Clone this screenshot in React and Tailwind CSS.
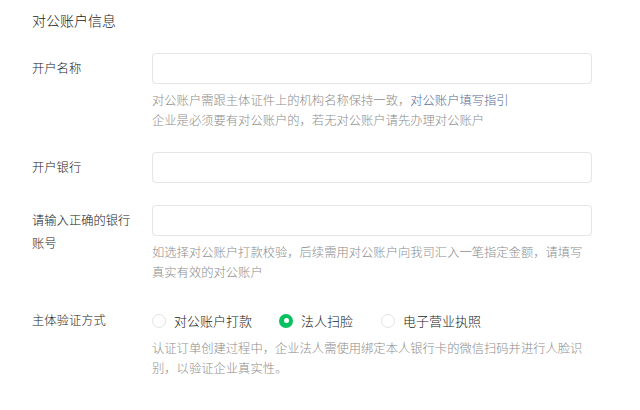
import React from 'react';

const font = { fontFamily: '"Noto Sans CJK SC", "Noto Sans", sans-serif' };

function Label({ children }) {
  return (
    <div className="w-[120px] shrink-0 pt-[4px] text-[12.3px] leading-[23px] text-[#222]">
      {children}
    </div>
  );
}

function Input() {
  return (
    <input
      type="text"
      className="h-[31px] w-[440px] rounded-[4px] border border-[#e6e6e6] bg-white px-3 text-[13px] outline-none shadow-[0_0_1px_rgba(0,0,0,0.06)]"
    />
  );
}

function Help({ children }) {
  return (
    <div className="mt-[7px] text-[12.3px] leading-[19.5px] text-[#8c8c8c]">{children}</div>
  );
}

function Radio({ checked, label }) {
  return (
    <label className="flex items-center">
      {checked ? (
        <span className="flex h-[14px] w-[14px] items-center justify-center rounded-full bg-[#07c160]">
          <span className="h-[5px] w-[5px] rounded-full bg-white" />
        </span>
      ) : (
        <span className="h-[14px] w-[14px] rounded-full border border-[#e3e3e3] bg-white" />
      )}
      <span className="ml-[8px] text-[13px] text-[#222]">{label}</span>
    </label>
  );
}

export default function App() {
  return (
    <div className="min-h-[410px] w-[640px] bg-white px-8 pt-[10px] font-light" style={font}>
      <div className="text-[14px] leading-[20px] text-[#222]">对公账户信息</div>

      <div className="mt-[23px] flex">
        <Label>开户名称</Label>
        <div>
          <Input />
          <Help>
            对公账户需跟主体证件上的机构名称保持一致，<span className="text-[#576b95]">对公账户填写指引</span>
            <br />
            企业是必须要有对公账户的，若无对公账户请先办理对公账户
          </Help>
        </div>
      </div>

      <div className="mt-[22px] flex">
        <Label>开户银行</Label>
        <Input />
      </div>

      <div className="mt-[22px] flex">
        <Label>
          请输入正确的银行
          <br />
          账号
        </Label>
        <div>
          <Input />
          <Help>
            如选择对公账户打款校验，后续需用对公账户向我司汇入一笔指定金额，请填写
            <br />
            真实有效的对公账户
          </Help>
        </div>
      </div>

      <div className="mt-[23px] flex">
        <Label>主体验证方式</Label>
        <div className="pt-[4px]">
          <div className="flex h-[23px] items-center">
            <Radio label="对公账户打款" />
            <div className="ml-[27px]">
              <Radio checked label="法人扫脸" />
            </div>
            <div className="ml-[28px]">
              <Radio label="电子营业执照" />
            </div>
          </div>
          <Help>
            认证订单创建过程中，企业法人需使用绑定本人银行卡的微信扫码并进行人脸识
            <br />
            别，以验证企业真实性。
          </Help>
        </div>
      </div>
    </div>
  );
}
